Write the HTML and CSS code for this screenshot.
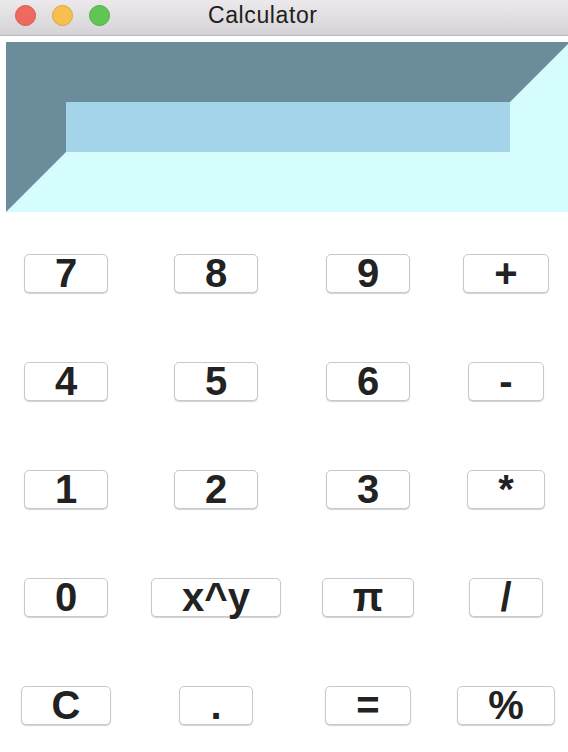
FILE: index.html
```html
<!DOCTYPE html>
<html lang="en">
<head>
<meta charset="utf-8">
<title>Calculator</title>
<link rel="stylesheet" href="styles.css">
</head>
<body>
<div class="window">
  <header class="titlebar">
    <div class="lights">
      <span class="light red"></span>
      <span class="light yellow"></span>
      <span class="light green"></span>
    </div>
    <div class="title">Calculator</div>
  </header>
  <main class="content">
    <div class="display"><div class="screen"></div></div>
    <div class="keys">
      <div class="cell"><button class="key">7</button></div>
      <div class="cell"><button class="key">8</button></div>
      <div class="cell"><button class="key">9</button></div>
      <div class="cell"><button class="key">+</button></div>
      <div class="cell"><button class="key">4</button></div>
      <div class="cell"><button class="key">5</button></div>
      <div class="cell"><button class="key">6</button></div>
      <div class="cell"><button class="key">-</button></div>
      <div class="cell"><button class="key">1</button></div>
      <div class="cell"><button class="key">2</button></div>
      <div class="cell"><button class="key">3</button></div>
      <div class="cell"><button class="key">*</button></div>
      <div class="cell"><button class="key">0</button></div>
      <div class="cell"><button class="key">x^y</button></div>
      <div class="cell"><button class="key pi">π</button></div>
      <div class="cell"><button class="key">/</button></div>
      <div class="cell"><button class="key">C</button></div>
      <div class="cell"><button class="key">.</button></div>
      <div class="cell"><button class="key">=</button></div>
      <div class="cell"><button class="key">%</button></div>
    </div>
  </main>
</div>
</body>
</html>
```
FILE: styles.css
```css
html, body {
  margin: 0;
  padding: 0;
  overflow: hidden;
  background: #ffffff;
}

.window {
  width: 568px;
  height: 752px;
  overflow: hidden;
  font-family: "Liberation Sans", Arial, sans-serif;
}

.titlebar {
  height: 36px;
  box-sizing: border-box;
  border-bottom: 1px solid #b9b7b9;
  background: linear-gradient(#ebe9eb, #d5d3d5);
  display: flex;
  align-items: flex-start;
}

.lights {
  display: flex;
  gap: 16px;
  padding: 5px 0 0 15px;
  width: 193px;
  box-sizing: border-box;
}

.light {
  width: 21px;
  height: 21px;
  border-radius: 50%;
  box-sizing: border-box;
}

.red { background: #ef6a5e; border: 1px solid #d8564b; }
.yellow { background: #f6bf4f; border: 1px solid #dea53a; }
.green { background: #61c554; border: 1px solid #4fae42; }

.title {
  font-size: 23px;
  letter-spacing: 0.6px;
  color: #1e1e1e;
  padding-left: 15px;
  line-height: 30px;
}

.content {
  padding-top: 6px;
}

.display {
  margin-left: 6px;
  width: 444px;
  height: 50px;
  border-style: solid;
  border-width: 60px;
  border-color: #6a8c9b #d6fdfd #d6fdfd #6a8c9b;
}

.screen {
  height: 100%;
  background: #a4d4ea;
}

.keys {
  margin-top: 7px;
  display: grid;
  grid-template-columns: 132px 168px 136px 140px;
  grid-auto-rows: 108px;
  align-items: center;
  justify-items: center;
}

.cell {
  display: flex;
  justify-content: center;
}

.key {
  height: 39px;
  padding: 0 30px;
  margin: 0;
  border: 1px solid #c9c9c9;
  border-radius: 5px;
  background: #ffffff;
  box-shadow: 0 1px 1px rgba(0, 0, 0, 0.18);
  font-family: "Liberation Sans", Arial, sans-serif;
  font-weight: bold;
  font-size: 40px;
  line-height: 37px;
  color: #222222;
  display: flex;
  align-items: center;
  justify-content: center;
}

.pi {
  padding: 0 30px;
}
```
